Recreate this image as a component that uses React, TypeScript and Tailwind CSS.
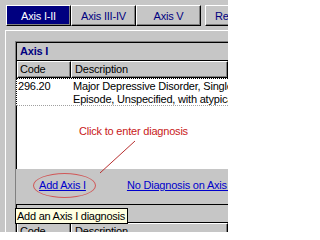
import React from 'react'

const tabs = [
  { label: 'Axis I-II', active: true },
  { label: 'Axis III-IV', active: false },
  { label: 'Axis V', active: false },
]

const raised = 'border-t border-l border-white border-r border-b border-r-black border-b-black shadow-[inset_-1px_-1px_0_#808080]'

function HeaderRow() {
  return (
    <div className="flex h-[17px]">
      <div className={`w-[54px] flex items-center pl-[2px] ${raised}`}>Code</div>
      <div className={`flex-1 flex items-center pl-[3px] ${raised}`}>Description</div>
    </div>
  )
}

function ListBox({ title, children }: { title: string; children?: React.ReactNode }) {
  return (
    <div className="border-t border-l border-black">
      <div className="h-[18px] border-b border-black flex items-center pl-[3px] font-bold text-[#000080]">{title}</div>
      <HeaderRow />
      {children}
    </div>
  )
}

export default function App() {
  return (
    <div
      className="relative w-[228px] h-[232px] overflow-hidden bg-[#c6c6c6] text-[11px] leading-[13px] tracking-[-0.2px] text-black flex flex-col"
      style={{ fontFamily: '"Liberation Sans", Arial, sans-serif' }}>
      <div className="flex pt-[5px] pl-[6px] shrink-0">
        {tabs.map((tab) => (
          <div
            key={tab.label}
            className={`w-[65px] h-[21px] shrink-0 flex items-center justify-center pt-[2px] ${raised} ${
              tab.active ? 'bg-[#000080] text-white' : 'text-[#000080]'
            }`}>
            {tab.label}
          </div>
        ))}
        <div className={`ml-[4px] w-[70px] h-[21px] shrink-0 flex items-center pl-[9px] pt-[2px] text-[#000080] ${raised}`}>
          Review
        </div>
      </div>

      <div className="mt-[4px] ml-[5px] flex-1 border-t border-l border-white">
        <div className="ml-[9px] mt-[10px] border-t border-l border-[#808080]">
          <ListBox title="Axis I">
            <div className="h-[91px] bg-white">
              <div className="-ml-px flex h-[28px] border-t border-l border-dotted border-black border-b border-b-solid border-b-[#a0a0a0] bg-white">
                <div className="w-[54px] pl-[1px] pt-[1px]">296.20</div>
                <div className="flex-1 pl-[2px] pt-[1px] whitespace-nowrap overflow-hidden">
                  <div>Major Depressive Disorder, Single</div>
                  <div>Episode, Unspecified, with atypical</div>
                </div>
              </div>
            </div>
          </ListBox>

          <div className="h-[35px] flex items-start pt-[10px] pl-[23px] whitespace-nowrap">
            <span className="text-[#0000cc] underline">Add Axis I</span>
            <span className="ml-[41px] text-[#0000cc] underline">No Diagnosis on Axis I</span>
          </div>

          <ListBox title="Axis II" />
        </div>
      </div>

      {/* annotation drawn over the screen */}
      <div className="absolute left-[79px] top-[125px] text-[#c81818] whitespace-nowrap">Click to enter diagnosis</div>
      <svg className="absolute left-0 top-0 pointer-events-none" width="228" height="232">
        <line x1="135" y1="141" x2="100" y2="173" stroke="#b83030" strokeWidth="1" />
      </svg>
      <div className="absolute left-[33px] top-[173px] w-[63px] h-[25px] rounded-[50%] border border-[#d05858]" />

      <div className="absolute left-[15px] top-[208px] w-[113px] h-[16px] bg-[#ffffe1] border border-black pl-[1px] pt-[1px] whitespace-nowrap tracking-[-0.25px]">
        Add an Axis I diagnosis
      </div>
    </div>
  )
}
